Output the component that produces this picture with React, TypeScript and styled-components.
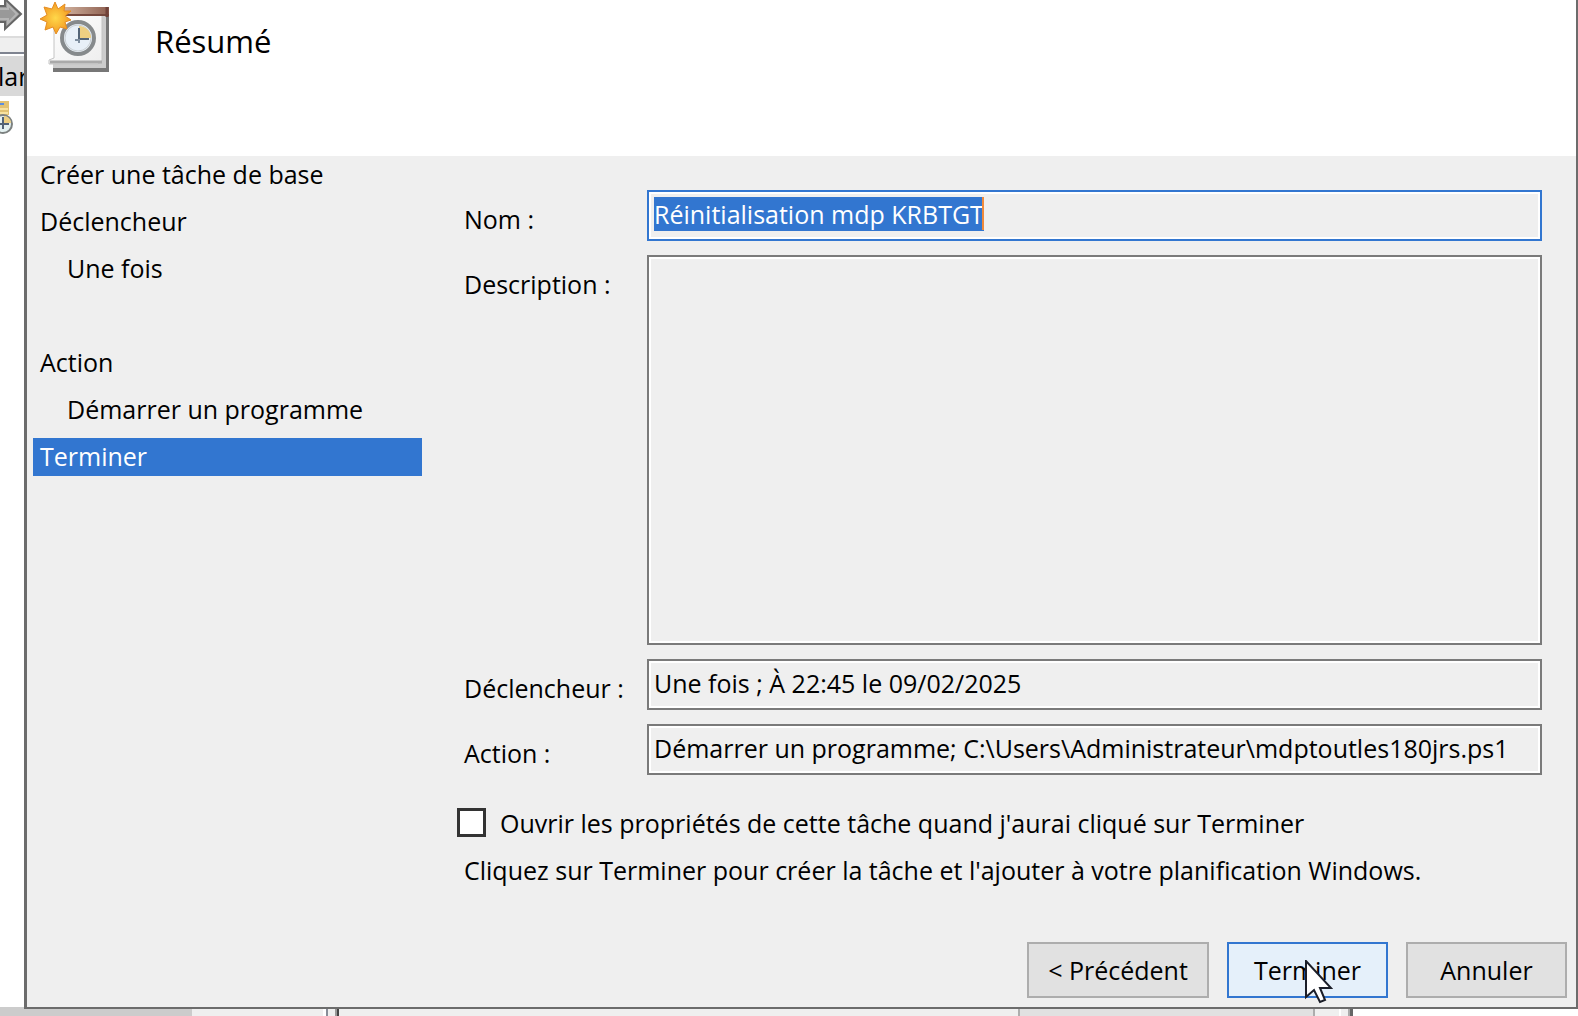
import React, { useEffect, useRef } from "react";
import styled, { createGlobalStyle } from "styled-components";

const face = "#efefef";
const accent = "#3276d0";

const GlobalStyle = createGlobalStyle`
  * { box-sizing: border-box; }
  body {
    margin: 0;
    background: #fff;
    color: #000;
    font-family: "Open Sans", "Noto Sans", sans-serif;
    font-size: 25px;
    line-height: 36px;
  }
  button, input, textarea { font: inherit; color: inherit; }
`;

const Desktop = styled.div`
  display: grid;
  grid-template-columns: 24px minmax(0, 1fr);
  grid-template-rows: minmax(0, 1fr) 7px;
  min-height: 100vh;
`;

const BackPane = styled.aside`
  display: flex;
  flex-direction: column;
  overflow: hidden;
  border-bottom: 2px solid #ccc;
`;

const BackToolbar = styled.div`
  height: 36px;
  svg { display: block; }
`;

const BackBar = styled.div`
  height: 18px;
  flex: none;
  background: ${face};
  border-top: 2px solid #dcdcdc;
  border-bottom: 2px solid #7f8490;
`;

const BackNode = styled.div`
  height: 40px;
  flex: none;
  margin: 2px 0 5px;
  background: #d9d9d9;
  line-height: 40px;
  text-indent: -2px;
  white-space: nowrap;
`;

const BackStrip = styled.div`
  grid-column: 1 / -1;
  display: flex;
  background: #fff;
`;

const StripPart = styled.div<{ $w: number; $color: string }>`
  width: ${(p) => p.$w}px;
  background: ${(p) => p.$color};
`;

const Dialog = styled.main`
  display: flex;
  flex-direction: column;
  background: ${face};
  border: solid #6c6c6c;
  border-width: 0 2px 2px 3px;
`;

const Header = styled.header`
  display: flex;
  align-items: flex-start;
  gap: 45px;
  height: 156px;
  padding: 2px 13px;
  background: #fff;
`;

const Title = styled.h1`
  margin: 0;
  padding-top: 15px;
  font-size: 31px;
  line-height: 48px;
  font-weight: 400;
`;

const Body = styled.div`
  flex: 1;
  display: grid;
  grid-template-columns: 395px minmax(0, 1fr);
  column-gap: 35px;
  padding-right: 34px;
`;

const Steps = styled.ul`
  display: flex;
  flex-direction: column;
  gap: 9px;
  margin: 0;
  padding: 0 0 0 6px;
  list-style: none;
`;

const Step = styled.li<{ $nested?: boolean; $current?: boolean }>`
  height: 38px;
  padding-left: ${(p) => (p.$nested ? 34 : 7)}px;
  background: ${(p) => (p.$current ? accent : "transparent")};
  color: ${(p) => (p.$current ? "#fff" : "#000")};
`;

const Form = styled.form`
  display: flex;
  flex-direction: column;
  padding-top: 34px;
`;

const Fields = styled.div`
  flex: 1;
  display: grid;
  grid-template-columns: 183px minmax(0, 1fr);
  grid-template-rows: auto 1fr auto auto;
  row-gap: 14px;
  padding-left: 7px;
`;

const Label = styled.label`
  padding-top: 11px;
`;

const FieldWrap = styled.div`
  position: relative;
  display: flex;
`;

const TextBox = styled.input<{ $active?: boolean }>`
  width: 100%;
  height: 51px;
  padding: 5px 5px 9px;
  border: 2px solid ${(p) => (p.$active ? accent : "#7a7a7a")};
  border-radius: 0;
  background: ${face};
  box-shadow: inset 0 0 0 2px #fff;
  line-height: 33px;
  outline: none;
  &::selection { background: ${accent}; color: #fff; }
`;

const TextArea = styled.textarea`
  width: 100%;
  padding: 5px;
  border: 2px solid #7a7a7a;
  border-radius: 0;
  background: ${face};
  box-shadow: inset 0 0 0 2px #fff;
  outline: none;
  resize: none;
`;

const Caret = styled.span`
  position: absolute;
  top: 7px;
  left: 335px;
  width: 2px;
  height: 33px;
  background: #f08a3c;
`;

const CheckRow = styled.label`
  display: flex;
  align-items: center;
  gap: 14px;
  height: 29px;
  margin-top: 33px;
  white-space: nowrap;
`;

const CheckBox = styled.input`
  appearance: none;
  width: 29px;
  height: 29px;
  margin: 0;
  border: 3px solid #333;
  background: #fff;
`;

const Hint = styled.p`
  margin: 15px 0 0;
  padding-left: 7px;
  white-space: nowrap;
`;

const Footer = styled.footer`
  display: flex;
  justify-content: flex-end;
  gap: 18px;
  padding: 54px 9px 9px;
`;

const Button = styled.button<{ $wide?: boolean; $hot?: boolean }>`
  position: relative;
  width: ${(p) => (p.$wide ? 182 : 161)}px;
  height: 56px;
  padding: 0;
  border: 2px solid ${(p) => (p.$hot ? accent : "#adadad")};
  background: ${(p) => (p.$hot ? "#e5f0fa" : "#e1e1e1")};
  white-space: nowrap;
`;

const Pointer = styled.svg`
  position: absolute;
  top: 16px;
  left: 76px;
`;

const TaskIcon = () => (
  <svg width="70" height="72" viewBox="0 0 70 72" aria-hidden="true">
    <defs>
      <linearGradient id="page" x1="0" y1="0" x2="1" y2="1">
        <stop offset="0" stopColor="#fff" />
        <stop offset="1" stopColor="#eee" />
      </linearGradient>
      <linearGradient id="band" x1="0" y1="0" x2="1" y2="0">
        <stop offset="0" stopColor="#d5b6a2" />
        <stop offset="1" stopColor="#8d5f50" />
      </linearGradient>
      <radialGradient id="sun">
        <stop offset="0" stopColor="#ffd84a" />
        <stop offset="1" stopColor="#f39a22" />
      </radialGradient>
    </defs>
    <path d="M13 62H63V5H69V70H13Z" fill="#777" />
    <path d="M13 60H62V8H66V66H13Z" fill="#ccc" />
    <path d="M14 12H62V59L58 62H9V58L14 56Z" fill="url(#page)" stroke="#c4c4c4" />
    <path d="M10 60H62" stroke="#aaa" strokeWidth="3" />
    <path d="M20 5H69V14H20Z" fill="url(#band)" />
    <path d="M26 13H69" stroke="#75483d" strokeWidth="2" />
    <path d="M67 5V15" stroke="#704239" strokeWidth="3" />
    <circle cx="38" cy="36" r="16" fill="#e9f0f7" stroke="#868a8c" strokeWidth="4" />
    <circle cx="38" cy="36" r="13" fill="#e8f0f8" stroke="#c9cfd3" strokeWidth="1" />
    <path d="M39 36V24A12 12 0 0 1 51 36Z" fill="#edcf82" />
    <path d="M39 26V37H49" fill="none" stroke="#536477" strokeWidth="2" />
    <path d="M35 38H39V41" fill="none" stroke="#7f8fa0" strokeWidth="2" />
    <path
      d="M15 0L18 7L25 2L24 9L31 9L25 14L31 18L25 20L27 27L20 25L16 32L13 25L5 28L7 20L0 17L7 13L4 5L12 7Z"
      fill="url(#sun)"
      stroke="#e58d22"
    />
  </svg>
);

const BackArrow = () => (
  <svg width="24" height="32" viewBox="0 0 24 32" aria-hidden="true">
    <path d="M-2 6H5V-1L21 14L5 29V22H-2Z" fill="#999" stroke="#666" strokeWidth="2" />
    <path d="M0 9H8V5L17 14L8 23V19H0" fill="none" stroke="#b5b5b5" strokeWidth="2" />
  </svg>
);

const BackClock = () => (
  <svg width="24" height="34" viewBox="0 0 24 34" aria-hidden="true">
    <path d="M0 0H9V14H0Z" fill="#e2c272" />
    <path d="M0 8H8M0 12H8" stroke="#f7e2a0" strokeWidth="2" />
    <path d="M0 3H4" stroke="#5b8ee0" strokeWidth="2" />
    <circle cx="3" cy="23" r="9" fill="#e4f1f1" stroke="#7c8180" strokeWidth="2" />
    <path d="M4 22V15A7 7 0 0 1 11 22Z" fill="#edcf82" />
    <path d="M3 16V28M0 23H9" stroke="#536477" strokeWidth="2" />
  </svg>
);

const strip: [number, string][] = [
  [192, "#ccc"],
  [131, face],
  [3, "#fff"],
  [2, "#888d98"],
  [7, face],
  [2, "#999"],
  [2, "#444"],
  [679, face],
  [2, "#adadad"],
  [293, "#e1e1e1"],
  [2, "#adadad"],
  [24, face],
  [2, "#fff"],
  [7, face],
  [2, "#aaa"],
  [3, "#666"],
];

export default function App() {
  const nameRef = useRef<HTMLInputElement>(null);

  useEffect(() => {
    nameRef.current?.focus();
    nameRef.current?.select();
  }, []);

  return (
    <>
      <GlobalStyle />
      <Desktop>
        <BackPane>
          <BackToolbar>
            <BackArrow />
          </BackToolbar>
          <BackBar />
          <BackNode>lar</BackNode>
          <BackClock />
        </BackPane>
        <Dialog>
          <Header>
            <TaskIcon />
            <Title>Résumé</Title>
          </Header>
          <Body>
            <Steps>
              <Step>Créer une tâche de base</Step>
              <Step>Déclencheur</Step>
              <Step $nested>Une fois</Step>
              <Step aria-hidden="true" />
              <Step>Action</Step>
              <Step $nested>Démarrer un programme</Step>
              <Step $current aria-current="step">Terminer</Step>
            </Steps>
            <Form id="summary" onSubmit={(e) => e.preventDefault()}>
              <Fields>
                <Label htmlFor="name">Nom :</Label>
                <FieldWrap>
                  <TextBox
                    id="name"
                    ref={nameRef}
                    $active
                    readOnly
                    spellCheck={false}
                    value="Réinitialisation mdp KRBTGT"
                  />
                  <Caret />
                </FieldWrap>
                <Label htmlFor="description">Description :</Label>
                <TextArea id="description" readOnly />
                <Label htmlFor="trigger">Déclencheur :</Label>
                <TextBox id="trigger" readOnly value="Une fois ; À 22:45 le 09/02/2025" />
                <Label htmlFor="action">Action :</Label>
                <TextBox
                  id="action"
                  readOnly
                  value="Démarrer un programme; C:\Users\Administrateur\mdptoutles180jrs.ps1"
                />
              </Fields>
              <CheckRow>
                <CheckBox type="checkbox" />
                Ouvrir les propriétés de cette tâche quand j'aurai cliqué sur Terminer
              </CheckRow>
              <Hint>
                Cliquez sur Terminer pour créer la tâche et l'ajouter à votre planification Windows.
              </Hint>
            </Form>
          </Body>
          <Footer>
            <Button type="button" $wide>&lt; Précédent</Button>
            <Button type="submit" form="summary" $hot>
              Terminer
              <Pointer width="28" height="44" viewBox="0 0 28 44" aria-hidden="true">
                <path
                  d="M1 1V37L9 30L15 42L20 40L15 28H26Z"
                  fill="#fff"
                  stroke="#1b1e28"
                  strokeWidth="2"
                />
              </Pointer>
            </Button>
            <Button type="button">Annuler</Button>
          </Footer>
        </Dialog>
        <BackStrip>
          {strip.map(([w, color], i) => (
            <StripPart key={i} $w={w} $color={color} />
          ))}
        </BackStrip>
      </Desktop>
    </>
  );
}
